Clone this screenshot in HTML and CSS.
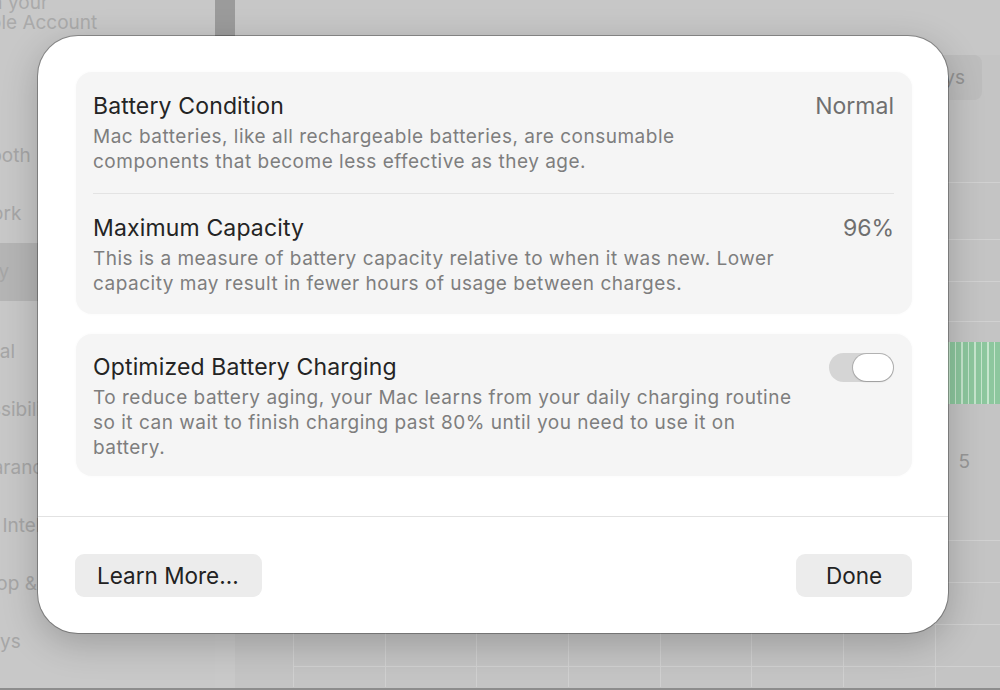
FILE: index.html
```html
<!DOCTYPE html>
<html lang="en">
<head>
<meta charset="utf-8">
<title>Battery Health</title>
<link rel="stylesheet" href="styles.css">
</head>
<body>
<div class="backdrop">
  <aside class="sidebar">
    <div class="sidebar-inner">
      <div class="account">Sign in<br>with your<br>Apple Account</div>
      <div class="nav-item">Wi-Fi</div>
      <div class="nav-item">Bluetooth</div>
      <div class="nav-item">Network</div>
      <div class="nav-item selected">Battery</div>
      <div class="nav-group">
        <div class="nav-item">General</div>
        <div class="nav-item">Accessibility</div>
        <div class="nav-item">Appearance</div>
        <div class="nav-item">Apple Intelligence &amp; Siri</div>
        <div class="nav-item">Desktop &amp; Dock</div>
        <div class="nav-item">Displays</div>
      </div>
    </div>
  </aside>
  <div class="split">
    <div class="split-handle"></div>
  </div>
  <main class="content">
    <div class="toolbar"></div>
    <div class="segment-row">
      <div class="segment"><span>Last 24 Hours</span><span>Last 10 Days</span></div>
    </div>
    <div class="chart">
      <div class="chart-lines">
        <div class="grid-row r1"></div>
        <div class="grid-row r2"></div>
        <div class="grid-row r3"></div>
      </div>
      <div class="bars"></div>
      <div class="axis-label">5</div>
      <div class="chart-lines lower">
        <div class="grid-row r4"></div>
        <div class="grid-row r4"></div>
        <div class="grid-row r4"></div>
        <div class="grid-row r5"></div>
      </div>
    </div>
  </main>
</div>

<section class="sheet">
  <div class="sheet-body">
    <div class="card">
      <div class="row">
        <div class="row-text">
          <div class="row-title">Battery Condition</div>
          <div class="row-desc">Mac batteries, like all rechargeable batteries, are consumable<br>components that become less effective as they age.</div>
        </div>
        <div class="row-value">Normal</div>
      </div>
      <div class="row">
        <div class="row-text">
          <div class="row-title">Maximum Capacity</div>
          <div class="row-desc">This is a measure of battery capacity relative to when it was new. Lower<br>capacity may result in fewer hours of usage between charges.</div>
        </div>
        <div class="row-value">96%</div>
      </div>
    </div>
    <div class="card">
      <div class="row">
        <div class="row-text">
          <div class="row-title">Optimized Battery Charging</div>
          <div class="row-desc">To reduce battery aging, your Mac learns from your daily charging routine<br>so it can wait to finish charging past 80% until you need to use it on<br>battery.</div>
        </div>
        <div class="toggle"><div class="knob"></div></div>
      </div>
    </div>
  </div>
  <div class="sheet-footer">
    <button class="btn btn-learn">Learn More...</button>
    <button class="btn btn-done">Done</button>
  </div>
</section>
</body>
</html>
```

FILE: styles.css
```css
html, body {
  margin: 0;
  padding: 0;
}
body {
  width: 1000px;
  height: 690px;
  overflow: hidden;
  position: relative;
  background: #c5c5c5;
  font-family: "Inter", "Liberation Sans", sans-serif;
}

/* ---------- dimmed background window ---------- */
.backdrop {
  display: flex;
  height: 688px;
  border-bottom: 2px solid #8d8d8d;
}
.sidebar {
  width: 215px;
  flex-shrink: 0;
  background: #c8c8c8;
  overflow: hidden;
  color: #a6a6a6;
  font-size: 19px;
}
.sidebar-inner {
  margin-left: -55px;
  width: 270px;
}
.account {
  height: 96px;
  margin-top: -27px;
  padding-left: 20px;
  line-height: 20px;
  color: #aaaaaa;
  box-sizing: border-box;
}
.nav-item {
  height: 58px;
  line-height: 58px;
  white-space: nowrap;
}
.nav-item.selected {
  background: #b5b5b5;
}
.nav-group {
  margin-top: 22px;
}
.split {
  width: 20px;
  flex-shrink: 0;
  background: #c9c9c9;
}
.split-handle {
  height: 40px;
  background: #9b9b9b;
}
.content {
  flex: 1;
  display: flex;
  flex-direction: column;
  background: #c4c4c4;
}
.toolbar {
  height: 55px;
  background: #c7c7c7;
}
.segment-row {
  display: flex;
  justify-content: flex-end;
  padding-right: 18px;
}
.segment {
  height: 45px;
  display: flex;
  align-items: center;
  gap: 24px;
  padding: 0 17px 0 24px;
  background: #bdbdbd;
  border-radius: 8px;
  color: #929292;
  font-size: 19px;
}
.chart {
  margin-left: 58px;
  margin-top: 82px;
  display: flex;
  flex-direction: column;
}
.grid-row {
  border-top: 1px solid #d1d1d1;
  box-sizing: border-box;
}
.r1 { height: 57px; }
.r2 { height: 42px; }
.r3 { height: 41px; border-bottom: 1px solid #d1d1d1; }
.bars {
  margin-top: 20px;
  height: 62px;
  background: repeating-linear-gradient(to right, #8dc79e 0 5px, #c6e5cd 5px 6.5px);
}
.axis-label {
  height: 136px;
  display: flex;
  justify-content: flex-end;
  padding: 47px 30px 0 0;
  box-sizing: border-box;
  color: #979797;
  font-size: 19px;
  line-height: 22px;
}
.chart-lines.lower {
  background-image: repeating-linear-gradient(to right, #d0d0d0 0 1px, transparent 1px 91.7px);
}
.r4 { height: 42px; }
.r5 { height: 21px; }

/* ---------- sheet ---------- */
.sheet {
  position: absolute;
  left: 38px;
  top: 36px;
  width: 910px;
  height: 597px;
  box-sizing: border-box;
  background: #ffffff;
  border-radius: 40px;
  box-shadow: 0 0 0 1px rgba(0, 0, 0, 0.3), 0 10px 36px rgba(0, 0, 0, 0.22);
  display: flex;
  flex-direction: column;
}
.sheet-body {
  padding: 36px 36px 40px 38px;
  display: flex;
  flex-direction: column;
  gap: 20px;
}
.card {
  background: #f5f5f5;
  border-radius: 16px;
  padding: 0 18px 0 17px;
  box-shadow: 0 0 3px rgba(0, 0, 0, 0.03);
}
.row {
  display: flex;
  justify-content: space-between;
  align-items: flex-start;
  padding: 21px 0 19px;
}
.card .row + .row {
  border-top: 1px solid #e3e3e3;
  padding-top: 21px;
  padding-bottom: 18px;
}
.card:last-child .row {
  padding: 20px 0 16px;
}
.row-title {
  font-size: 23px;
  line-height: 26px;
  letter-spacing: 0.15px;
  color: #242424;
}
.row-desc {
  font-size: 19px;
  line-height: 25px;
  letter-spacing: 0.5px;
  color: #7e7e7e;
  margin-top: 5px;
}
.row-value {
  font-size: 23px;
  line-height: 26px;
  color: #6f6f6f;
}
.toggle {
  width: 65px;
  height: 29px;
  margin-top: -1px;
  border-radius: 15px;
  background: #d5d5d5;
  display: flex;
  justify-content: flex-end;
  align-items: center;
  padding: 0 1px;
  box-sizing: border-box;
}
.knob {
  width: 40px;
  height: 27px;
  border-radius: 14px;
  background: #ffffff;
  box-shadow: 0 0 0 1px rgba(0, 0, 0, 0.16), 0 1px 2px rgba(0, 0, 0, 0.12);
}
.sheet-footer {
  border-top: 1px solid #e2e2e2;
  padding: 37px 36px 36px 37px;
  display: flex;
  justify-content: space-between;
}
.btn {
  height: 43px;
  border: none;
  border-radius: 9px;
  background: #ececec;
  color: #222222;
  font-family: inherit;
  font-size: 22.5px;
  padding: 0 22px;
}
.btn-learn {
  padding: 0 23px 0 22px;
}
.btn-done {
  min-width: 116px;
}
```
